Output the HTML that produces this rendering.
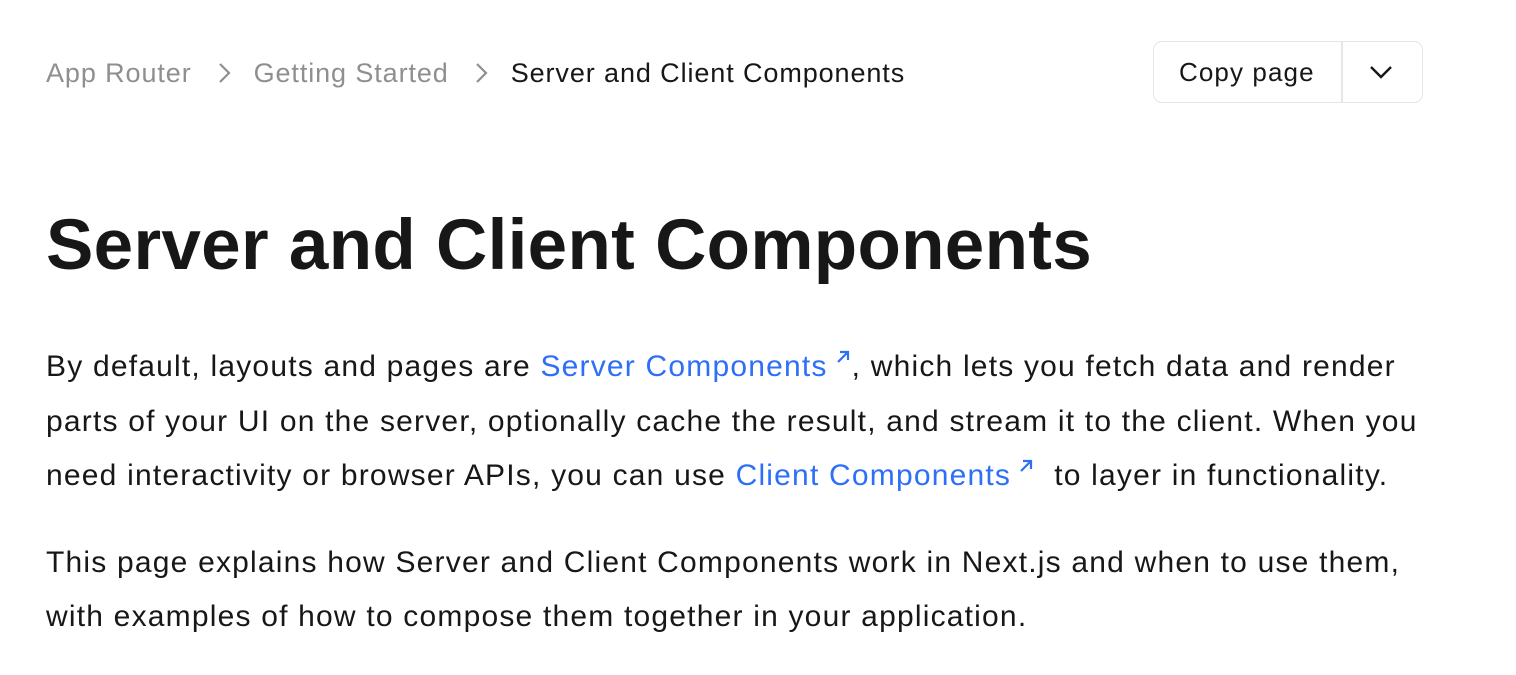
<!DOCTYPE html>
<html><head><meta charset="utf-8"><style>
body{margin:0;background:#fff;font-family:"Liberation Sans",Arial,sans-serif;color:#171717;width:1516px;height:675px;overflow:hidden;position:relative}
.bc{position:absolute;left:46px;top:56px;font-size:27px;color:#8f8f8f;white-space:nowrap;line-height:34px;letter-spacing:0.9px}
.bc .cur{color:#171717}
.bc svg{vertical-align:-3px;margin:0 22px 0 24px}
.btn{position:absolute;left:1153px;top:41px;width:270px;height:62px;border:1.5px solid #e6e6e6;border-radius:9px;box-sizing:border-box}
.btn .t{position:absolute;left:25px;top:15px;font-size:26px;color:#171717;letter-spacing:1.1px}
.btn .sep{position:absolute;left:187px;top:0;width:1.5px;height:100%;background:#e6e6e6}
.btn svg{position:absolute;left:214px;top:20px}
h1{position:absolute;left:46px;top:201px;margin:0;font-size:71px;font-weight:700;line-height:90px;white-space:nowrap;letter-spacing:0.3px}
.p{position:absolute;left:46px;font-size:30px;white-space:nowrap;line-height:40px;letter-spacing:1.2px}
a{color:#2d6ff7;text-decoration:none}
.ar{display:inline-block;width:18px;height:18px;position:relative;top:-10px;margin-left:6px}
</style></head><body>
<div class="bc">App Router<svg width="16" height="24" viewBox="0 0 16 24"><path d="M4 3l9 9-9 9" fill="none" stroke="#8f8f8f" stroke-width="2.2"/></svg>Getting Started<svg width="16" height="24" viewBox="0 0 16 24"><path d="M4 3l9 9-9 9" fill="none" stroke="#8f8f8f" stroke-width="2.2"/></svg><span class="cur">Server and Client Components</span></div>
<div class="btn"><span class="t">Copy page</span><div class="sep"></div><svg width="26" height="20" viewBox="0 0 26 20"><path d="M3 5l10 10 10-10" fill="none" stroke="#171717" stroke-width="2.4"/></svg></div>
<h1>Server and Client Components</h1>
<div class="p" style="top:347px">By default, layouts and pages are <a>Server Components<svg class="ar" viewBox="0 0 18 18"><path d="M4 14L14 4M6 4h8v8" fill="none" stroke="#2d6ff7" stroke-width="2.2"/></svg></a>, which lets you fetch data and render</div>
<div class="p" style="top:402px">parts of your UI on the server, optionally cache the result, and stream it to the client. When you</div>
<div class="p" style="top:456px">need interactivity or browser APIs, you can use <a>Client Components<svg class="ar" viewBox="0 0 18 18"><path d="M4 14L14 4M6 4h8v8" fill="none" stroke="#2d6ff7" stroke-width="2.2"/></svg></a>&nbsp; to layer in functionality.</div>
<div class="p" style="top:543px">This page explains how Server and Client Components work in Next.js and when to use them,</div>
<div class="p" style="top:597px">with examples of how to compose them together in your application.</div>
</body></html>
